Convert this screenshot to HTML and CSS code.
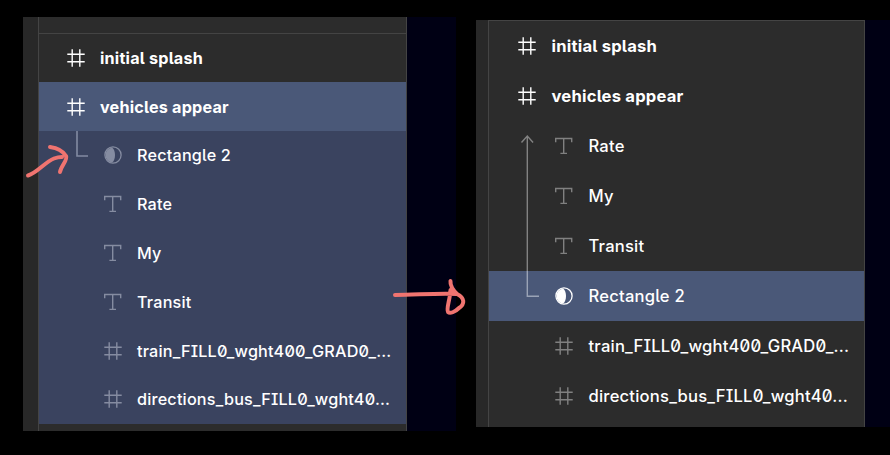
FILE: index.html
```html
<!DOCTYPE html>
<html lang="en">
<head>
<meta charset="utf-8">
<title>Layers</title>
<link rel="stylesheet" href="styles.css">
</head>
<body>
<svg class="defs" width="0" height="0" aria-hidden="true">
  <symbol id="frame" viewBox="0 0 18 18"><path d="M5.2 .3v17.4M12.8 .3v17.4M.3 5.2h17.4M.3 12.8h17.4" fill="none" stroke="currentColor" stroke-width="1.4"/></symbol>
  <symbol id="text" viewBox="0 0 18 18"><path d="M.7 5.2V1.5h16v3.7M8.7 1.5v14.9M5.4 16.4h6.6" fill="none" stroke="currentColor" stroke-width="1.4"/></symbol>
  <symbol id="mask" viewBox="0 0 18 18"><circle cx="9" cy="9" r="8.1" fill="none" stroke="currentColor" stroke-width="1.3"/><path d="M8 1.4A7.7 7.7 0 0 0 8 16.6C12 14 12 4 8 1.4Z" fill="currentColor"/></symbol>
</svg>
<main class="board">
  <section class="shot before">
    <div class="gutter"></div>
    <div class="panel">
      <div class="strip"></div>
      <div class="row top"><svg><use href="#frame"/></svg><span>initial splash</span></div>
      <div class="row top selected"><svg><use href="#frame"/></svg><span>vehicles appear</span></div>
      <div class="row child"><svg><use href="#mask"/></svg><span>Rectangle 2</span></div>
      <div class="row child"><svg><use href="#text"/></svg><span>Rate</span></div>
      <div class="row child"><svg><use href="#text"/></svg><span>My</span></div>
      <div class="row child"><svg><use href="#text"/></svg><span>Transit</span></div>
      <div class="row child"><svg><use href="#frame"/></svg><span>train_FILL0_wght400_GRAD0_...</span></div>
      <div class="row child"><svg><use href="#frame"/></svg><span>directions_bus_FILL0_wght40...</span></div>
    </div>
  </section>
  <section class="shot after">
    <div class="gutter"></div>
    <div class="panel">
      <div class="row top"><svg><use href="#frame"/></svg><span>initial splash</span></div>
      <div class="row top"><svg><use href="#frame"/></svg><span>vehicles appear</span></div>
      <div class="row child"><svg><use href="#text"/></svg><span>Rate</span></div>
      <div class="row child"><svg><use href="#text"/></svg><span>My</span></div>
      <div class="row child"><svg><use href="#text"/></svg><span>Transit</span></div>
      <div class="row child selected"><svg><use href="#mask"/></svg><span>Rectangle 2</span></div>
      <div class="row child"><svg><use href="#frame"/></svg><span>train_FILL0_wght400_GRAD0_...</span></div>
      <div class="row child"><svg><use href="#frame"/></svg><span>directions_bus_FILL0_wght40...</span></div>
    </div>
  </section>
  <svg class="marks" viewBox="0 0 890 455" fill="none">
    <path d="M77 131v25h11" stroke="#838ba2" stroke-width="1.6"/>
    <path d="M527.3 136v135M521.5 142.5l5.8-6.5 5.8 6.5" stroke="#828282" stroke-width="1.4"/>
    <path d="M527.3 271v25.3H539" stroke="#9aa3b6" stroke-width="1.4"/>
    <g class="ink">
      <path d="M28 175.5C37 173 45 162 54 158.5Q58 157 62 157M50 147C57 148 63 151 66 156C68 160 61 166 60 172"/>
      <path d="M395 295C415 295 437 293 457 294M450.5 281C450 286 453 290 457 294C465 298 465 304 459 308C455 312 450 314 448 312C446 309 450 300 450.5 290"/>
    </g>
  </svg>
</main>
</body>
</html>
```
FILE: styles.css
```css
* { box-sizing: border-box; }
body { margin: 0; background: #000; }
.defs { position: absolute; }
.board {
  position: relative;
  display: flex;
  align-items: flex-start;
  gap: 19.5px;
  width: 890px;
  height: 455px;
  padding: 16.5px 0 0 23px;
  overflow: hidden;
  font-family: Inter, sans-serif;
  font-feature-settings: "zero", "ss02";
  letter-spacing: .2px;
  color: #fff;
}
.shot { display: flex; flex: none; background: #000014; }
.before { width: 433px; height: 414.5px; --pitch: 48.8px; font-size: 16.2px; }
.after { width: 415px; height: 407px; margin-top: 3px; --pitch: 50px; font-size: 16.6px; }
.gutter { width: 15px; background: #282828; }
.after .gutter { width: 12.5px; }
.panel {
  width: 369px;
  background: #2c2c2c;
  border: solid #444;
  border-width: 0 1.5px;
}
.after .panel { width: 377px; border-top-width: 1.5px; }
.strip { height: 17px; border-bottom: 1.5px solid #444; }
.row {
  display: flex;
  align-items: center;
  gap: 15px;
  height: var(--pitch);
  padding-left: 28px;
  white-space: nowrap;
  font-weight: 500;
}
.before .top span { padding-top: 1px; }
.row svg { width: 18px; height: 18px; flex: none; }
.row.top { font-weight: 700; }
.child { padding-left: 65px; }
.child svg { color: #808080; }
.before .child { background: #3a435f; }
.before .child svg { color: #858ca1; }
.row.selected { background: #4a5878; }
.row.selected svg { color: #fff; }
.after .row { padding-left: 28.5px; gap: 16px; }
.after .child { padding-left: 65.5px; }
.marks { position: absolute; inset: 0; width: 890px; height: 455px; }
.ink { stroke: #f07470; stroke-width: 4; stroke-linecap: round; stroke-linejoin: round; }
```
